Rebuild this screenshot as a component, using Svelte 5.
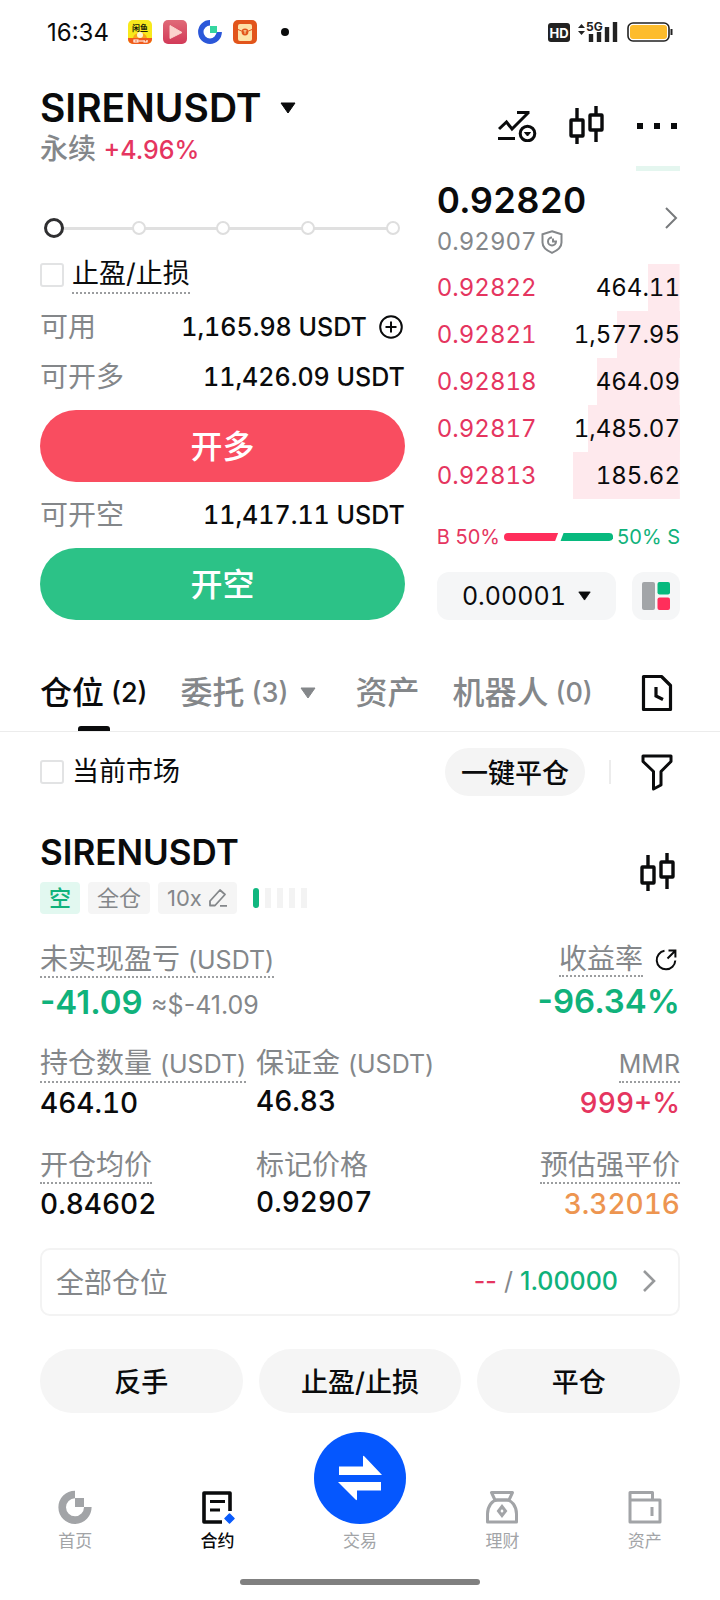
<script lang="ts">
  type Ask = { price: string; size: string; depth: number };

  // depth is the share of the row filled by the bar, in percent
  const asks: Ask[] = [
    { price: '0.92822', size: '464.11', depth: 13 },
    { price: '0.92821', size: '1,577.95', depth: 26 },
    { price: '0.92818', size: '464.09', depth: 34 },
    { price: '0.92817', size: '1,485.07', depth: 38 },
    { price: '0.92813', size: '185.62', depth: 44 }
  ];

  const tabs = [
    { id: 'positions', label: '仓位', count: '(2)', menu: false },
    { id: 'orders', label: '委托', count: '(3)', menu: true },
    { id: 'assets', label: '资产', count: '', menu: false },
    { id: 'bots', label: '机器人', count: '(0)', menu: false }
  ];

  const stats = [
    { label: '持仓数量', unit: '(USDT)', value: '464.10', hint: true, tone: '' },
    { label: '保证金', unit: '(USDT)', value: '46.83', hint: false, tone: '' },
    { label: '', unit: 'MMR', value: '999+%', hint: true, tone: 'red' },
    { label: '开仓均价', unit: '', value: '0.84602', hint: true, tone: '' },
    { label: '标记价格', unit: '', value: '0.92907', hint: false, tone: '' },
    { label: '预估强平价', unit: '', value: '3.32016', hint: true, tone: 'orange' }
  ];

  const actions = ['反手', '止盈/止损', '平仓'];

  const nav = [
    { id: 'home', label: '首页' },
    { id: 'futures', label: '合约' },
    { id: 'trade', label: '交易' },
    { id: 'earn', label: '理财' },
    { id: 'wallet', label: '资产' }
  ];

  let activeTab = $state('positions');
  let activeNav = $state('futures');
  let amount = $state(0);
  let tpsl = $state(false);
  let currentOnly = $state(false);
</script>

{#snippet candles()}
  <svg width="36" height="40" viewBox="0 0 36 40" fill="none" stroke="currentColor" stroke-width="3.4">
    <rect x="2" y="14" width="12" height="16" rx="0.5" />
    <path d="M8 2v12M8 30v8" />
    <rect x="21" y="9" width="12" height="15" rx="0.5" />
    <path d="M27 0v9M27 24v12" />
  </svg>
{/snippet}

{#snippet caret()}
  <svg class="caret" width="16" height="12" viewBox="0 0 16 12"><path d="M1 1h14L8 11z" fill="currentColor" stroke="currentColor" stroke-linejoin="round" /></svg>
{/snippet}

<div class="screen">
  <div class="status">
    <span class="time">16:34</span>
    <svg width="24" height="24" viewBox="0 0 24 24">
      <rect width="24" height="24" rx="5" fill="#f8e91c" />
      <path d="M0 18h24v1a5 5 0 0 1-5 5H5a5 5 0 0 1-5-5z" fill="#f05a1c" />
      <path d="M5 18q1-5 7-5t7 5z" fill="#f9a51a" />
      <circle cx="12" cy="15" r="3" fill="#fff6d0" />
      <text x="12" y="11" font-size="8" font-weight="700" text-anchor="middle" fill="#221f0a">闲鱼</text>
      <path d="M6 20h4v2H6zM11 21h4M16 20v2h3v-2" fill="none" stroke="#fff" stroke-width="1.2" />
    </svg>
    <svg width="24" height="24" viewBox="0 0 24 24">
      <defs>
        <linearGradient id="play" x1="0" y1="0" x2="0" y2="1">
          <stop offset="0" stop-color="#e06a78" />
          <stop offset="1" stop-color="#d23a58" />
        </linearGradient>
      </defs>
      <rect width="24" height="24" rx="5" fill="url(#play)" />
      <path d="M7 5.500v13l12-6z" fill="#fbd3cd" stroke="#fbd3cd" stroke-linejoin="round" />
    </svg>
    <svg width="24" height="24" viewBox="0 0 24 24">
      <path d="M12 2.800A9.200 9.200 0 1 0 21.200 12" fill="none" stroke="#2b57d9" stroke-width="5.400" />
      <rect x="12" y="6" width="7" height="7" fill="#35d6a0" />
    </svg>
    <svg width="24" height="24" viewBox="0 0 24 24">
      <rect width="24" height="24" rx="5" fill="#e2551b" />
      <rect x="5" y="4" width="14" height="17" rx="2" fill="#fde3a8" />
      <path d="M5 9.500l7 3 7-3" fill="none" stroke="#e2551b" />
      <circle cx="12" cy="12" r="3.400" fill="#e2551b" />
      <path d="M10.500 10.800h3M12 10.800v3" stroke="#fde3a8" />
    </svg>
    <span class="more-dot"></span>
    <svg class="radio" width="125" height="24" viewBox="0 0 125 24">
      <rect x="0" y="3" width="22" height="19" rx="3" fill="#222" />
      <text x="11" y="18" font-size="13" font-weight="700" text-anchor="middle" fill="#fff">HD</text>
      <path d="M30 8l3.500-4 3.500 4zM30 11l3.500 4 3.500-4z" fill="#222" />
      <text x="38" y="11" font-size="12" font-weight="700" fill="#222">5G</text>
      <path d="M43 14v8M51 12v10M59 7v15M67 2v20" stroke="#222" stroke-width="4.400" />
      <rect x="80" y="3" width="41" height="18" rx="5" fill="#fff" stroke="#222" stroke-width="1.600" />
      <rect x="82" y="5" width="37" height="14" rx="3" fill="#fdbc2c" />
      <path d="M123.500 9v6" stroke="#222" stroke-width="2" />
    </svg>
  </div>

  <header class="header">
    <div class="pair">
      <button class="symbol">SIRENUSDT {@render caret()}</button>
      <p class="change">永续 <span class="num red">+4.96%</span></p>
    </div>
    <div class="tools">
      <button aria-label="指标">
        <svg width="40" height="32" viewBox="0 0 40 32" fill="none" stroke="currentColor" stroke-width="3">
          <path d="M1 19l7.500-7 5.500 7L30 3M19 2.500h12.500M0 28.500h17" />
          <circle cx="29.500" cy="23.500" r="7.300" />
          <path d="M26.500 22.500h6l-3 3.500z" fill="currentColor" stroke-width="1" />
        </svg>
      </button>
      <button aria-label="K线">{@render candles()}</button>
      <button aria-label="更多">
        <svg width="42" height="6" viewBox="0 0 42 6"><path d="M1 0h6v6H1zM18 0h6v6h-6zM35 0h6v6h-6z" fill="currentColor" /></svg>
      </button>
    </div>
  </header>

  <main>
    <section class="trade">
      <form class="order" onsubmit={(e) => e.preventDefault()}>
        <div class="slider">
          <div class="ticks">
            {#each [0, 25, 50, 75, 100] as tick (tick)}<i></i>{/each}
          </div>
          <input type="range" min="0" max="100" bind:value={amount} aria-label="仓位比例" />
        </div>
        <label class="check">
          <input type="checkbox" bind:checked={tpsl} />
          <span class="hint">止盈/止损</span>
        </label>
        <div class="line">
          <span>可用</span>
          <span class="num">1,165.98 USDT</span>
          <button type="button" class="add" aria-label="充值">
            <svg width="24" height="24" viewBox="0 0 24 24" fill="none" stroke="currentColor" stroke-width="2">
              <circle cx="12" cy="12" r="10.800" />
              <path d="M12 6.500v11M6.500 12h11" />
            </svg>
          </button>
        </div>
        <div class="line"><span>可开多</span><span class="num">11,426.09 USDT</span></div>
        <button class="side long">开多</button>
        <div class="line"><span>可开空</span><span class="num">11,417.11 USDT</span></div>
        <button class="side short">开空</button>
      </form>

      <div class="book">
        <div class="bid-edge"></div>
        <a class="last" href="#market">
          <span class="prices">
            <strong>0.92820</strong>
            <span class="index">
              0.92907
              <svg width="22" height="24" viewBox="0 0 22 24" fill="none" stroke="currentColor" stroke-width="2">
                <path d="M11 1.200l9.500 3v8.300c0 4.500-4 8-9.500 10.300C5.500 20.500 1.500 17 1.500 12.500V4.200z" />
                <path d="M11 7.500a4 4 0 1 0 4 4h-3V8.500" />
              </svg>
            </span>
          </span>
          <svg width="14" height="24" viewBox="0 0 14 24" fill="none" stroke="#777a7c" stroke-width="2"><path d="M2 2l10 10L2 22" /></svg>
        </a>
        <table>
          <tbody>
            {#each asks as ask (ask.price)}
              <tr style="background-size: {ask.depth}% 100%">
                <td class="price">{ask.price}</td>
                <td class="size">{ask.size}</td>
              </tr>
            {/each}
          </tbody>
        </table>
        <div class="ratio">
          <span class="red">B 50%</span>
          <svg viewBox="0 0 110 8" preserveAspectRatio="none">
            <path d="M4 0h50.500l-3 8H4a4 4 0 0 1 0-8z" fill="#ff2e5b" />
            <path d="M60 0h46a4 4 0 0 1 0 8H57z" fill="#07b97e" />
          </svg>
          <span class="green">50% S</span>
        </div>
        <div class="book-foot">
          <label class="step">
            <select aria-label="价格精度">
              <option>0.00001</option>
            </select>
            {@render caret()}
          </label>
          <button class="layout" aria-label="盘口布局">
            <svg width="28" height="28" viewBox="0 0 28 28">
              <rect width="13" height="28" rx="2" fill="#a2a5a8" />
              <rect x="15.500" width="12.500" height="12.500" rx="2" fill="#07b97e" />
              <rect x="15.500" y="15.500" width="12.500" height="12.500" rx="2" fill="#ff2e5b" />
            </svg>
          </button>
        </div>
      </div>
    </section>

    <div class="tabs">
      {#each tabs as tab (tab.id)}
        <button class="tab" class:active={activeTab === tab.id} onclick={() => (activeTab = tab.id)}>
          {tab.label}{#if tab.count}<span class="count">{tab.count}</span>{/if}
          {#if tab.menu}{@render caret()}{/if}
        </button>
      {/each}
      <button class="history" aria-label="历史记录">
        <svg width="32" height="38" viewBox="0 0 32 38" fill="none" stroke="currentColor" stroke-width="3.200">
          <path d="M2.500 2.500h18l9 9v24h-27z" stroke-linejoin="round" />
          <path d="M15 13v9l7 3.500" />
        </svg>
      </button>
    </div>

    <div class="filters">
      <label class="check">
        <input type="checkbox" bind:checked={currentOnly} />
        <span>当前市场</span>
      </label>
      <button class="close-all">一键平仓</button>
      <span class="rule"></span>
      <button aria-label="筛选">
        <svg width="32" height="38" viewBox="0 0 32 38" fill="none" stroke="currentColor" stroke-width="3" stroke-linejoin="round">
          <path d="M2 3h28v5.500L20 18.500v13.500l-7.500 4V18.500L2 8.500z" />
        </svg>
      </button>
    </div>

    <section class="position">
      <div class="pos-head">
        <div>
          <h2>SIRENUSDT</h2>
          <div class="tags">
            <span class="tag short-tag">空</span>
            <span class="tag">全仓</span>
            <button class="tag">
              10x
              <svg width="20" height="20" viewBox="0 0 20 20" fill="none" stroke="currentColor" stroke-width="1.800">
                <path d="M2 17.500v-4.500L12 2l5 4.500L7 17.500zM12 17.800h7" stroke-linejoin="round" />
              </svg>
            </button>
            <span class="risk"><i class="on"></i><i></i><i></i><i></i><i></i></span>
          </div>
        </div>
        <button aria-label="K线">{@render candles()}</button>
      </div>

      <div class="pnl">
        <div>
          <span class="label hint">未实现盈亏 <span class="num">(USDT)</span></span>
          <p class="big green">-41.09 <small>≈$-41.09</small></p>
        </div>
        <div class="end">
          <div class="roe">
            <span class="label hint">收益率</span>
            <button aria-label="分享">
              <svg width="22" height="22" viewBox="0 0 22 22" fill="none" stroke="currentColor" stroke-width="2">
                <path d="M9.500 1.800A9.300 9.300 0 1 0 20.300 11.500M12.500 9.500L20 2M13.500 1.600h6.900v6.900" />
              </svg>
            </button>
          </div>
          <p class="big green">-96.34%</p>
        </div>
      </div>

      <div class="stats">
        {#each stats as s (s.value)}
          <div>
            <span class="label" class:hint={s.hint}>{s.label} {#if s.unit}<span class="num">{s.unit}</span>{/if}</span>
            <p class={s.tone}>{s.value}</p>
          </div>
        {/each}
      </div>

      <button class="all">
        <span>全部仓位</span>
        <span class="targets"><b class="red">--</b> / <b class="green">1.00000</b></span>
        <svg width="14" height="24" viewBox="0 0 14 24" fill="none" stroke="#97999b" stroke-width="2.600"><path d="M2 2l10 10L2 22" /></svg>
      </button>

      <div class="actions">
        {#each actions as action (action)}
          <button>{action}</button>
        {/each}
      </div>
    </section>
  </main>

  <nav class="bottom">
    {#each nav as item (item.id)}
      <a href="#{item.id}" class:active={activeNav === item.id} onclick={() => (activeNav = item.id)}>
        {#if item.id === 'home'}
          <svg width="34" height="34" viewBox="0 0 34 34">
            <path d="M17 4.500A12.800 12.800 0 1 0 29.800 17" fill="none" stroke="currentColor" stroke-width="7.600" />
            <rect x="17" y="8" width="9" height="9" fill="currentColor" />
          </svg>
        {:else if item.id === 'futures'}
          <svg width="34" height="34" viewBox="0 0 34 34" fill="none" stroke="currentColor" stroke-width="3.600">
            <path d="M29 21V3H3v29h18" stroke-linejoin="round" />
            <path d="M9 11.500h15M9 20h10" stroke-width="3" />
            <path d="M28.500 24l4.500 4.500-4.500 4.500-4.500-4.500z" fill="#0a5bfb" stroke="#0a5bfb" stroke-width="1.500" stroke-linejoin="round" />
          </svg>
        {:else if item.id === 'trade'}
          <svg width="92" height="92" viewBox="0 0 92 92">
            <circle cx="46" cy="46" r="46" fill="#0557fe" />
            <path d="M25 34.500h24V25q0-2 1.500-.5L68 43H25zM67 58.500H43V67q0 2-1.500.5L24 50H67z" fill="#fff" />
          </svg>
        {:else if item.id === 'earn'}
          <svg width="34" height="34" viewBox="0 0 34 34" fill="none" stroke="currentColor" stroke-width="3">
            <path d="M6.500 2.500h21L24 10H10z" stroke-linejoin="round" />
            <path d="M2.500 32V24c0-8 5-14 10-14h9c5 0 10 6 10 14v8z" stroke-linejoin="round" />
            <path d="M17 16.500l3.500 4.500-3.500 4.500-3.500-4.500z" />
          </svg>
        {:else}
          <svg width="34" height="34" viewBox="0 0 34 34" fill="none" stroke="currentColor" stroke-width="3">
            <path d="M2 10V2.500h22.500V10M2 10h30v22H2zM24 17v9" stroke-linejoin="round" />
          </svg>
        {/if}
        <span>{item.label}</span>
      </a>
    {/each}
  </nav>
  <div class="home-bar"></div>
</div>

<style>
  :global(body) {
    background: #fff;
  }

  .screen {
    --ink: #0a0b0c;
    --gray: #84878a;
    --red: #e5355f;
    --green: #10b27b;
    color: var(--ink);
    font-family: Inter, 'Noto Sans CJK SC', sans-serif;
    font-size: 27px;
  }

  .screen :is(button, select, input) {
    font: inherit;
    color: inherit;
    margin: 0;
    padding: 0;
    border: 0;
    background: none;
  }

  .screen button {
    display: flex;
    align-items: center;
    justify-content: center;
    cursor: pointer;
  }

  a { color: inherit; text-decoration: none; }
  p, h2 { margin: 0; }
  svg { display: block; flex: none; }

  .num { font-size: 25px; }
  .red { color: var(--red); }
  .green { color: var(--green); }
  .orange { color: #ed9550; }

  /* fixed-width digits wherever numbers stack */
  .line .num,
  .prices,
  table,
  .stats p {
    font-variant-numeric: tabular-nums;
  }

  .status {
    display: flex;
    align-items: center;
    gap: 11px;
    height: 64px;
    padding: 0 47px;
  }
  .time { font-size: 24px; margin-right: 8px; }
  .more-dot {
    width: 8px;
    height: 8px;
    margin-left: 13px;
    border-radius: 50%;
    background: var(--ink);
  }
  .radio { margin-left: auto; }

  .header {
    display: flex;
    align-items: center;
    justify-content: space-between;
    padding: 21px 42px 0 40px;
  }
  .screen .symbol {
    gap: 18px;
    font-size: 39px;
    font-weight: 600;
    line-height: 46px;
  }
  .change {
    margin-top: 2px;
    color: var(--gray);
    font-size: 28px;
    font-weight: 500;
    line-height: 32px;
  }
  .tools { display: flex; align-items: center; gap: 31px; }

  .trade {
    display: grid;
    grid-template-columns: 3fr 2fr;
    gap: 32px;
    padding: 0 40px;
  }
  .order { padding-top: 52px; min-width: 0; }

  .slider { display: grid; padding: 0 5px 0 4px; }
  .slider > * { grid-area: 1 / 1; }
  .ticks {
    display: flex;
    align-items: center;
    justify-content: space-between;
    padding-left: 3px;
    background: linear-gradient(#e0e0e0, #e0e0e0) center / 96% 3px no-repeat;
  }
  .ticks i {
    box-sizing: border-box;
    width: 14px;
    height: 14px;
    border: 2px solid #dedede;
    border-radius: 50%;
    background: #fff;
  }
  .slider input { appearance: none; width: 100%; height: 20px; }
  .slider input::-webkit-slider-thumb {
    appearance: none;
    box-sizing: border-box;
    width: 20px;
    height: 20px;
    border: 3px solid #2f2f31;
    border-radius: 50%;
    background: #fff;
  }

  .check { display: flex; align-items: center; gap: 8px; line-height: 36px; }
  .order .check { margin: 18px 0 8px; }
  .screen .check input {
    appearance: none;
    box-sizing: border-box;
    width: 24px;
    height: 24px;
    border: 2px solid #e2e3e4;
    border-radius: 3px;
  }
  .check input:checked { background: var(--ink); }
  .hint { border-bottom: 2px dotted #9b9d9f; }

  .line {
    display: flex;
    align-items: center;
    color: var(--gray);
    font-size: 28px;
    line-height: 50px;
  }
  .line .num { margin-left: auto; color: var(--ink); font-weight: 500; }
  .screen .add { margin: 0 2px 0 12px; color: var(--ink); }

  .screen .side {
    width: 100%;
    height: 72px;
    margin: 8px 0;
    padding-bottom: 4px;
    border-radius: 36px;
    color: #fff;
    font-size: 32px;
    font-weight: 500;
  }
  .screen .side:last-child { margin-bottom: 0; }
  .screen .long { background: #f94d60; }
  .screen .short { background: #2cc287; }

  .book { display: flex; flex-direction: column; min-width: 0; }
  .bid-edge { align-self: flex-end; width: 18%; height: 5px; background: #e4f6ef; }
  .last {
    display: flex;
    align-items: center;
    justify-content: space-between;
    margin: 5px 0 4px;
    padding-right: 2px;
  }
  .prices strong { display: block; font-size: 36px; font-weight: 600; line-height: 48px; }
  .index {
    display: flex;
    align-items: center;
    gap: 4px;
    color: var(--gray);
    font-size: 24px;
    line-height: 36px;
  }

  table { width: 100%; border-collapse: collapse; font-size: 24px; }
  tr {
    height: 47px;
    background: linear-gradient(#fee9ed, #fee9ed) right / 0 100% no-repeat;
  }
  td { padding: 0; }
  .price { color: var(--red); }
  .size { text-align: right; }

  .ratio {
    display: flex;
    align-items: center;
    gap: 4px;
    margin: 22px 0 19px;
    font-size: 20px;
    line-height: 32px;
  }
  .ratio svg { flex: 1; min-width: 0; height: 8px; }

  .book-foot { display: flex; gap: 16px; }
  .step {
    display: flex;
    flex: 1;
    align-items: center;
    justify-content: center;
    gap: 12px;
    height: 48px;
    border-radius: 12px;
    background: #f5f6f7;
  }
  .screen .step select { appearance: none; font-size: 25px; font-variant-numeric: tabular-nums; }
  .step :global(.caret) { width: 13px; }
  .screen .layout { width: 48px; height: 48px; border-radius: 12px; background: #f5f6f7; }

  .tabs {
    display: flex;
    align-items: center;
    gap: 33px;
    padding: 51px 47px 16px 40px;
    border-bottom: 1px solid #ececec;
  }
  .screen .tab {
    position: relative;
    color: var(--gray);
    font-size: 32px;
    font-weight: 500;
    line-height: 44px;
    white-space: nowrap;
  }
  .count { margin-left: 7px; font-size: 27px; }
  .tab :global(.caret) { margin: 0 6px 0 12px; }
  .screen .tab.active { color: var(--ink); }
  .tab.active::after {
    content: '';
    position: absolute;
    bottom: -16px;
    left: calc(50% - 16px);
    width: 32px;
    height: 5px;
    border-radius: 3px 3px 0 0;
    background: var(--ink);
  }
  .screen .history { margin-left: auto; }

  .filters {
    display: flex;
    align-items: center;
    gap: 24px;
    padding: 16px 47px 0 40px;
  }
  .filters .check { margin-right: auto; }
  .screen .close-all {
    height: 48px;
    padding: 0 16px 2px;
    border-radius: 24px;
    background: #f4f4f4;
    font-weight: 500;
  }
  .rule { width: 2px; height: 24px; margin-right: 6px; background: #ececec; }

  .position { padding: 36px 40px 0; }
  .pos-head { display: flex; align-items: center; justify-content: space-between; padding-right: 4px; }
  h2 { font-size: 35px; font-weight: 600; line-height: 40px; }
  .tags { display: flex; align-items: center; gap: 8px; margin-top: 10px; }
  .screen .tag {
    display: flex;
    align-items: center;
    gap: 6px;
    height: 32px;
    padding: 0 9px;
    border-radius: 4px;
    background: #f5f5f5;
    color: var(--gray);
    font-size: 22px;
    line-height: 32px;
  }
  .screen .short-tag { background: #e2f8f0; color: var(--green); font-weight: 500; }
  .risk { display: flex; gap: 6px; margin-left: 8px; }
  .risk i { width: 6px; height: 20px; background: #f3f3f3; }
  .risk .on { border-radius: 3px; background: #10b77f; }

  .pnl { display: flex; justify-content: space-between; margin-top: 29px; }
  .label {
    display: inline-block;
    color: var(--gray);
    font-size: 28px;
    line-height: 34px;
    white-space: nowrap;
    vertical-align: top;
  }
  .pnl .label { line-height: 32px; }
  .big { font-size: 33px; font-weight: 600; line-height: 48px; }
  .big small { color: var(--gray); font-size: 25px; font-weight: 400; }
  .end { text-align: right; }
  .roe { display: flex; justify-content: flex-end; align-items: center; gap: 12px; padding-right: 3px; }

  .stats {
    display: grid;
    grid-template-columns: repeat(3, minmax(0, 1fr));
    gap: 25px 8px;
    margin-top: 17px;
  }
  .stats > :nth-child(3n) { text-align: right; }
  .stats p { font-size: 28px; font-weight: 500; line-height: 40px; }

  .screen .all {
    box-sizing: border-box;
    width: 100%;
    height: 68px;
    margin-top: 24px;
    padding: 0 22px 2px 14px;
    border: 2px solid #f3f3f3;
    border-radius: 10px;
    color: var(--gray);
    font-size: 28px;
  }
  .targets { margin: 0 24px 0 auto; font-size: 25px; }
  .targets b { font-weight: 500; }

  .actions { display: grid; grid-template-columns: repeat(3, 1fr); gap: 16px; margin-top: 33px; }
  .screen .actions button {
    height: 64px;
    padding-bottom: 2px;
    border-radius: 32px;
    background: #f5f5f5;
    font-weight: 500;
  }

  .bottom {
    display: grid;
    grid-template-columns: repeat(5, 1fr);
    align-items: end;
    padding: 19px 4px 0;
    color: #a2a4a7;
  }
  .bottom a {
    display: flex;
    flex-direction: column;
    align-items: center;
    gap: 5px;
    font-size: 17px;
    line-height: 24px;
  }
  .bottom .active { color: var(--ink); font-weight: 500; }
  .home-bar {
    width: 240px;
    max-width: 60%;
    height: 6px;
    margin: 26px auto 14px;
    border-radius: 3px;
    background: #808080;
  }
</style>
